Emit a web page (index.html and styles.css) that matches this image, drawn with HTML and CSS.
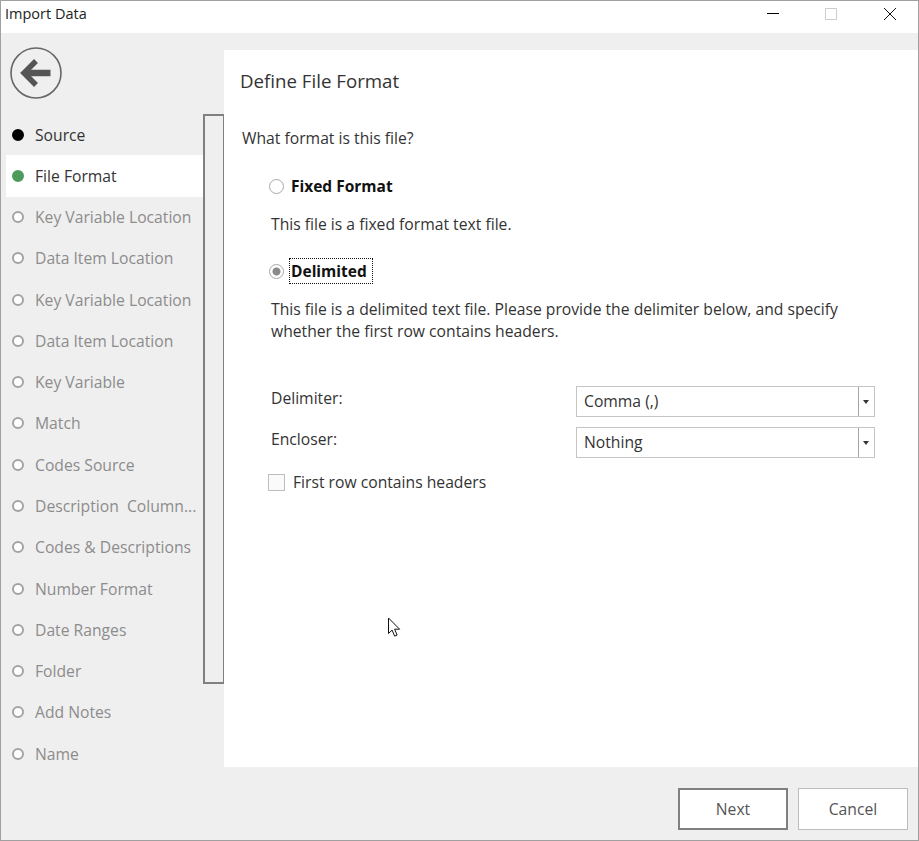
FILE: index.html
```html
<!DOCTYPE html>
<html lang="en">
<head>
    <meta charset="UTF-8">
    <title>Import Data</title>
    <link rel="stylesheet" href="styles.css">
</head>
<body>
    <div class="window">
        <div class="titlebar">
            <span class="title">Import Data</span>
            <div class="win-buttons">
                <svg class="win-btn" width="14" height="14" viewBox="0 0 14 14"><path d="M1 6.5h12" stroke="#000" fill="none"/></svg>
                <svg class="win-btn" width="14" height="14" viewBox="0 0 14 14"><path d="M1.5 1.5h11v11h-11z" stroke="#ccc" fill="none"/></svg>
                <svg class="win-btn" width="14" height="14" viewBox="0 0 14 14"><path d="M1 1l12 12M13 1L1 13" stroke="#111" fill="none"/></svg>
            </div>
        </div>
        <div class="content">
            <div class="sidebar">
                <div class="back">
                    <svg width="54" height="54" viewBox="0 0 54 54">
                        <circle cx="27" cy="27" r="25" fill="none" stroke="#666" stroke-width="1.6"/>
                        <path d="M41.5 27H18" stroke="#555" stroke-width="6.5" fill="none"/>
                        <path d="M27 15L15 27l12 12" stroke="#555" stroke-width="5.5" fill="none"/>
                    </svg>
                </div>
                <ul class="steps">
                    <li class="step done"><i></i>Source</li>
                    <li class="step current"><i></i>File Format</li>
                    <li class="step"><i></i>Key Variable Location</li>
                    <li class="step"><i></i>Data Item Location</li>
                    <li class="step"><i></i>Key Variable Location</li>
                    <li class="step"><i></i>Data Item Location</li>
                    <li class="step"><i></i>Key Variable</li>
                    <li class="step"><i></i>Match</li>
                    <li class="step"><i></i>Codes Source</li>
                    <li class="step"><i></i>Description&nbsp; Column...</li>
                    <li class="step"><i></i>Codes &amp; Descriptions</li>
                    <li class="step"><i></i>Number Format</li>
                    <li class="step"><i></i>Date Ranges</li>
                    <li class="step"><i></i>Folder</li>
                    <li class="step"><i></i>Add Notes</li>
                    <li class="step"><i></i>Name</li>
                </ul>
                <div class="scrollbox"></div>
            </div>
            <div class="main">
                <h1>Define File Format</h1>
                <p class="question">What format is this file?</p>
                <div class="options">
                    <div class="radio-row">
                        <span class="radio"></span>
                        <b class="radio-label">Fixed Format</b>
                    </div>
                    <p class="desc first-desc">This file is a fixed format text file.</p>
                    <div class="radio-row second">
                        <span class="radio checked"></span>
                        <b class="radio-label focused">Delimited</b>
                    </div>
                    <p class="desc second-desc">This file is a delimited text file. Please provide the delimiter below, and specify whether the first row contains headers.</p>
                    <div class="field">
                        <label>Delimiter:</label>
                        <div class="combo"><span class="combo-value">Comma (,)</span><span class="combo-arrow"></span></div>
                    </div>
                    <div class="field">
                        <label>Encloser:</label>
                        <div class="combo"><span class="combo-value">Nothing</span><span class="combo-arrow"></span></div>
                    </div>
                    <div class="check-row">
                        <span class="checkbox"></span>
                        First row contains headers
                    </div>
                </div>
                <svg class="cursor" width="14" height="21" viewBox="0 0 14 21">
                    <path d="M1.5 1v15.5l3.6-3.4 2.5 6 2.5-1-2.5-5.9h5z" fill="#fff" stroke="#111" stroke-width="1"/>
                </svg>
            </div>
        </div>
        <div class="footer">
            <button class="btn default">Next</button>
            <button class="btn">Cancel</button>
        </div>
    </div>
</body>
</html>
```

FILE: styles.css
```css
* {
    box-sizing: border-box;
}
html, body {
    margin: 0;
    height: 100%;
}
body {
    font-family: "Open Sans", "Noto Sans", sans-serif;
    font-size: 15.7px;
    color: #333;
    background: #efefef;
}
.window {
    width: 919px;
    height: 841px;
    border: 1px solid #a0a0a0;
    background: #efefef;
    display: flex;
    flex-direction: column;
}
.titlebar {
    height: 32px;
    background: #fff;
    display: flex;
    justify-content: space-between;
    padding-left: 4px;
    flex: none;
}
.title {
    line-height: 26px;
    font-size: 14.5px;
    color: #222;
}
.win-buttons {
    display: flex;
    align-items: flex-start;
    gap: 44px;
    padding: 6px 21px 0 0;
}
.win-btn:last-child {
    margin-left: 1px;
}
.content {
    display: flex;
    height: 734px;
    flex: none;
}
.sidebar {
    width: 223px;
    position: relative;
    flex: none;
}
.back {
    height: 81px;
    padding: 13px 0 0 8px;
    line-height: 0;
}
.steps {
    list-style: none;
    margin: 0;
    padding: 0 0 0 5px;
}
.step {
    width: 197px;
    height: 41.27px;
    display: flex;
    align-items: center;
    color: #8c8c8c;
    white-space: nowrap;
    overflow: hidden;
}
.step i {
    width: 12px;
    height: 12px;
    border-radius: 50%;
    border: 2px solid #a3a3a3;
    background: #fff;
    margin: 0 11px 0 6px;
    flex: none;
}
.step.done {
    color: #333;
}
.step.done i {
    background: #000;
    border-color: #000;
}
.step.current {
    color: #333;
    background: #fff;
}
.step.current i {
    background: #4c9a5c;
    border-color: #4c9a5c;
}
.scrollbox {
    position: absolute;
    left: 202px;
    top: 81px;
    width: 21px;
    height: 570px;
    border: 2px solid #808080;
    border-right-width: 1px;
    background: #efefef;
}
.main {
    flex: 1;
    margin-top: 17px;
    background: #fff;
    position: relative;
    padding: 17px 0 0 16px;
}
h1 {
    margin: 0;
    font-size: 18.7px;
    font-weight: 400;
    line-height: 28px;
    color: #333;
}
.question {
    margin: 33px 0 0 2px;
    line-height: 20px;
}
.options {
    margin-left: 31px;
    width: 604px;
}
.radio-row {
    display: flex;
    align-items: center;
    height: 24px;
    margin-top: 26px;
}
.radio-row.second {
    margin-top: 24px;
}
.radio {
    width: 15px;
    height: 15px;
    margin-left: -2px;
    border-radius: 50%;
    border: 1px solid #a8a8a8;
    background: #fff;
    margin-right: 7px;
    flex: none;
}
.radio.checked {
    background: radial-gradient(circle, #8a8a8a 0 3.5px, #fff 4.5px);
}
.radio-label {
    font-size: 15.5px;
    color: #111;
    font-weight: 700;
    line-height: 22px;
}
.focused {
    outline: 1px dotted #111;
    outline-offset: 1px;
    padding-right: 4px;
}
.desc {
    margin: 0;
    line-height: 22px;
}
.first-desc {
    margin-top: 15px;
}
.second-desc {
    margin-top: 15px;
    margin-bottom: 44px;
}
.field {
    display: flex;
    justify-content: space-between;
    height: 41px;
}
.field label {
    line-height: 24px;
}
.combo {
    width: 299px;
    height: 31px;
    border: 1px solid #c4c4c4;
    display: flex;
    justify-content: space-between;
}
.combo-value {
    padding-left: 7px;
    line-height: 28px;
}
.combo-arrow {
    width: 16px;
    border-left: 1px solid #a5a5a5;
    position: relative;
}
.combo-arrow::after {
    content: "";
    position: absolute;
    left: 4px;
    top: 13px;
    border: 3.5px solid transparent;
    border-top: 4px solid #333;
    border-bottom: 0;
}
.check-row {
    display: flex;
    align-items: center;
    height: 20px;
    margin-top: 4px;
}
.checkbox {
    width: 17px;
    height: 17px;
    margin-left: -3px;
    border: 1px solid #bdbdbd;
    background: #fafafa;
    margin-right: 8px;
}
.cursor {
    position: absolute;
    left: 163px;
    top: 567px;
}
.footer {
    flex: 1;
    display: flex;
    justify-content: flex-end;
    gap: 10px;
    padding: 21px 10px 0 0;
}
.btn {
    width: 110px;
    height: 42px;
    border: 1px solid #bdbdbd;
    background: #fff;
    font: inherit;
    color: #555;
    padding: 0;
}
.btn.default {
    border: 2px solid #808080;
}
```
